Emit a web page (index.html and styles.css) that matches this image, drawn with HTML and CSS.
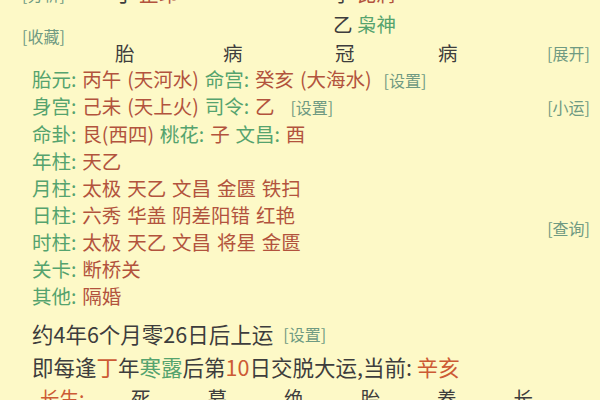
FILE: index.html
```html
<!DOCTYPE html>
<html lang="zh">
<head>
<meta charset="utf-8">
<link rel="stylesheet" href="styles.css">
</head>
<body>
<div class="page">
  <div class="head">
    <div class="hrow line-a">
      <span class="link">[分析]</span>
      <span class="dark cell-1">丁 <span class="red">正印</span></span>
      <span class="dark cell-3">子 <span class="red">比肩</span></span>
    </div>
    <div class="hrow line-b">
      <span class="link fav">[收藏]</span>
      <span class="dark cell-3 shen">乙 <span class="green">枭神</span></span>
    </div>
    <div class="hrow line-d">
      <span class="dark c1">胎</span>
      <span class="dark c2">病</span>
      <span class="dark c3">冠</span>
      <span class="dark c4">病</span>
      <span class="link c5">[展开]</span>
    </div>
  </div>

  <div class="body">
    <div class="row"><span class="txt"><span class="green">胎元:</span> <span class="red">丙午 (天河水)</span> <span class="green">命宫:</span> <span class="red">癸亥 (大海水)</span> <span class="link small">[设置]</span></span></div>
    <div class="row"><span class="txt"><span class="green">身宫:</span> <span class="red">己未 (天上火)</span> <span class="green">司令:</span> <span class="red">乙</span> <span class="link small wide">[设置]</span></span><span class="link side">[小运]</span></div>
    <div class="row"><span class="txt"><span class="green">命卦:</span> <span class="red">艮(西四)</span> <span class="green">桃花:</span> <span class="red">子</span> <span class="green">文昌:</span> <span class="red">酉</span></span></div>
    <div class="row"><span class="txt"><span class="green">年柱:</span> <span class="red">天乙</span></span></div>
    <div class="row"><span class="txt"><span class="green">月柱:</span> <span class="red">太极 天乙 文昌 金匮 铁扫</span></span></div>
    <div class="row"><span class="txt"><span class="green">日柱:</span> <span class="red">六秀 华盖 阴差阳错 红艳</span></span></div>
    <div class="row"><span class="txt"><span class="green">时柱:</span> <span class="red">太极 天乙 文昌 将星 金匮</span></span><span class="link side up">[查询]</span></div>
    <div class="row"><span class="txt"><span class="green">关卡:</span> <span class="red">断桥关</span></span></div>
    <div class="row"><span class="txt"><span class="green">其他:</span> <span class="red">隔婚</span></span></div>
    <div class="row big first-big"><span class="txt dark">约4年6个月零26日后上运</span><span class="link small gap">[设置]</span></div>
    <div class="row big"><span class="txt dark">即每逢<span class="orange">丁</span>年<span class="green">寒露</span>后第<span class="orange">10</span>日交脱大运,当前: <span class="orange">辛亥</span></span></div>
    <div class="row life">
      <span class="orange lbl">长生:</span>
      <span class="dark">死</span>
      <span class="dark">墓</span>
      <span class="dark">绝</span>
      <span class="dark">胎</span>
      <span class="dark">养</span>
      <span class="dark">长</span>
    </div>
  </div>
</div>
</body>
</html>
```
FILE: styles.css
```css
html, body {
  margin: 0;
  padding: 0;
  background: #fdf9c7;
}
body {
  width: 600px;
  height: 400px;
  overflow: hidden;
  font-family: "Noto Sans CJK SC", "Noto Sans", sans-serif;
  font-size: 19.5px;
  color: #3a3a3a;
}
.page {
  width: 600px;
}
.green { color: #55a36e; }
.red { color: #b2533d; }
.orange { color: #cc5a34; }
.dark { color: #3d3d3d; }
.link {
  color: #6f9a82;
  font-size: 16px;
  word-spacing: 0;
}

.hrow {
  display: grid;
  grid-template-columns: 93px 108px 107px 108px 107px 1fr;
  padding-left: 22px;
  align-items: center;
  line-height: 22px;
}
.line-a {
  height: 22px;
  margin-top: -17px;
}
.line-a .cell-1 { grid-column: 2; }
.line-a .cell-3 { grid-column: 4; padding-left: 3px; }
.line-b {
  height: 36px;
  margin-top: 5px;
}
.line-b .fav { grid-column: 1; align-self: end; line-height: 20px; }
.line-b .shen { grid-column: 4; align-self: start; line-height: 22px; padding-left: 3px; margin-top: 3px; }
.line-d {
  height: 24px;
  margin-top: -5px;
}
.c1 { grid-column: 2; }
.c2 { grid-column: 3; }
.c3 { grid-column: 4; padding-left: 5px; }
.c4 { grid-column: 5; }
.c5 { grid-column: 6; padding-left: 2px; }

.body {
  padding-left: 32px;
  padding-right: 10px;
  margin-top: 1px;
}
.row {
  display: flex;
  align-items: center;
  height: 27px;
  line-height: 24px;
}
.txt { white-space: nowrap; word-spacing: 1.5px; }
.small { margin-left: 6px; }
.wide { margin-left: 10px; }
.side { margin-left: auto; }
.up { align-self: flex-start; margin-top: -12px; }
.big { font-size: 21.5px; height: 33px; line-height: 28px; }
.big .txt { word-spacing: 0; }
.first-big { margin-top: 8px; }
.gap { margin-left: 10px; }
.life {
  height: 30px;
  padding-left: 8px;
}
.life .lbl { width: 94px; }
.life .dark { width: 79px; }
```
